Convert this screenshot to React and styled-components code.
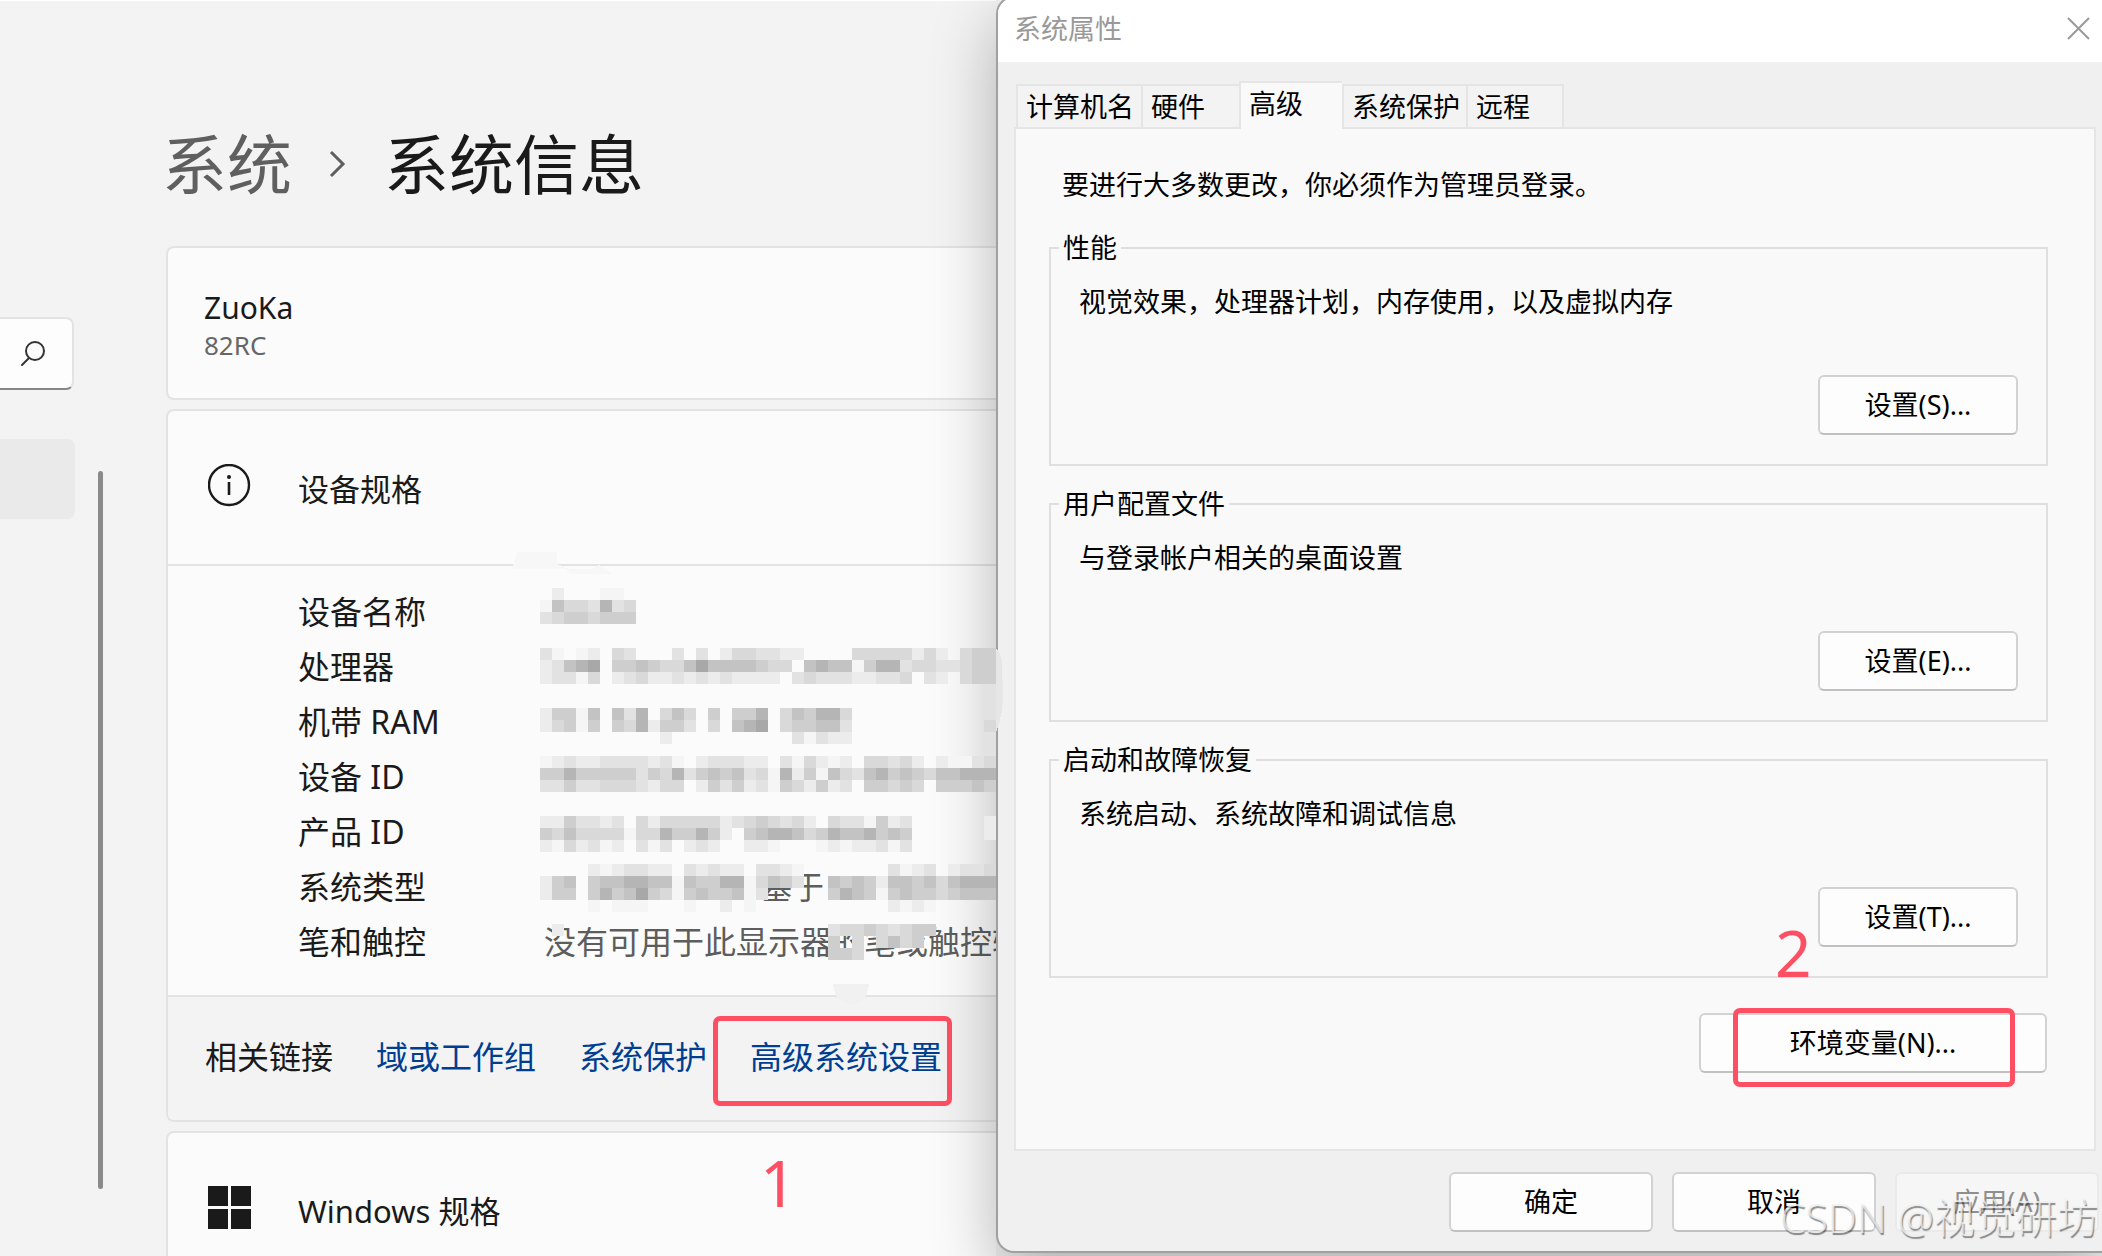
import { useState } from 'react'
import styled, { createGlobalStyle, css } from 'styled-components'

const GlobalStyle = createGlobalStyle`
    * {
        box-sizing: border-box;
    }
    body {
        margin: 0;
        background: #f3f3f3;
        color: #1a1a1a;
        font-family: "Noto Sans", "Noto Sans CJK SC", sans-serif;
    }
    button, input {
        font-family: inherit;
    }
`

const Desktop = styled.div`
    display: grid;
    grid-template-columns: minmax(0, 1fr) 1106px;
    grid-template-rows: minmax(0, 1fr);
    height: 100vh;
    overflow: hidden;
`

/* Settings window, the dialog covers whatever runs out of it */

const Settings = styled.div`
    display: flex;
    min-width: 0;
    border-top: 1px solid #fff;
`

const Sidebar = styled.aside`
    display: flex;
    flex: 0 0 166px;
    gap: 23px;
`

const SideNav = styled.nav`
    width: 75px;
    padding-top: 316px;
`

const SearchBox = styled.form`
    display: flex;
    align-items: center;
    justify-content: flex-end;
    height: 73px;
    margin-right: 1px;
    padding-right: 26px;
    background: #fdfdfd;
    border: 2px solid #e3e3e3;
    border-left: 0;
    border-bottom-color: #868686;
    border-radius: 0 8px 8px 0;
`

const SearchInput = styled.input`
    flex: 1;
    min-width: 0;
    width: 0;
    padding: 0;
    border: 0;
    background: transparent;
    font-size: 26px;
    outline: none;
`

const IconButton = styled.button`
    display: flex;
    padding: 0;
    border: 0;
    background: transparent;
    cursor: pointer;
`

const NavItem = styled.a`
    display: block;
    height: 80px;
    margin-top: 49px;
    background: #eaeaea;
    border-radius: 0 8px 8px 0;
`

const ScrollThumb = styled.div`
    width: 5px;
    height: 718px;
    margin-top: 470px;
    background: #8a8a8a;
    border-radius: 3px;
`

const Content = styled.main`
    display: flex;
    flex: 1;
    flex-direction: column;
    gap: 9px;
    min-width: 0;
`

const Breadcrumb = styled.header`
    display: flex;
    align-items: center;
    gap: 37px;
    margin-left: -4px;
    padding: 123px 0 33px;
    font-size: 65px;
    line-height: 80px;
    white-space: nowrap;
`

const CrumbLink = styled.a`
    color: #5f5f5f;
    text-decoration: none;
`

const PageTitle = styled.h1`
    margin: 0;
    font-size: inherit;
    font-weight: 400;
`

const Card = styled.section`
    flex-shrink: 0;
    background: #fbfbfb;
    border: 2px solid #e3e3e3;
    border-right: 0;
    border-radius: 8px 0 0 8px;
    white-space: nowrap;
`

const DeviceCard = styled(Card)`
    padding: 41px 36px 35px;
`

const DeviceName = styled.div`
    font-size: 30px;
    line-height: 38px;
`

const DeviceModel = styled.div`
    color: #666;
    font-size: 26px;
    line-height: 36px;
`

const CardHeader = styled.div`
    display: flex;
    align-items: center;
    gap: 47px;
    height: 155px;
    padding: 0 40px;
    border-bottom: 2px solid #e3e3e3;

    svg {
        margin-bottom: 4px;
    }
`

const CardTitle = styled.h2`
    margin: 0;
    padding-top: 2px;
    font-size: 31px;
    font-weight: 400;
    line-height: 40px;
`

const SpecBody = styled.div`
    position: relative;
    padding: 18px 0 26px 130px;
`

const SpecList = styled.dl`
    display: grid;
    grid-template-columns: 244px minmax(0, 1fr);
    grid-auto-rows: 55px;
    align-items: center;
    margin: 0;
    font-size: 32px;
    line-height: 40px;
`

const SpecName = styled.dt`
    color: #1a1a1a;
`

const SpecValue = styled.dd`
    margin: 0;
    padding-left: ${({ $indent }) => $indent || 2}px;
    color: #5d5d5d;
`

// lies over the values and runs a little past the edge of the dialog
const MosaicLayer = styled.svg`
    position: absolute;
    top: 22px;
    left: 372px;
    z-index: 3;
    overflow: visible;
    pointer-events: none;
`

const RelatedLinks = styled.div`
    display: flex;
    align-items: center;
    gap: 43px;
    height: 125px;
    padding: 0 0 3px 37px;
    background: #f3f3f3;
    border-top: 2px solid #e3e3e3;
    border-radius: 0 0 0 8px;
    font-size: 32px;
    line-height: 40px;
`

const RelatedLink = styled.a`
    position: relative;
    color: #003e92;
    text-decoration: none;
`

/* Red marks of the tutorial */

const markBox = css`
    position: absolute;
    border: 5px solid #ff4f62;
    border-radius: 7px;
    pointer-events: none;
`

const LinkMark = styled.span`
    ${markBox}
    inset: -21px -10px -29px -37px;
`

const ButtonMark = styled.span`
    ${markBox}
    inset: -5px 32px -14px 34px;
`

const StepNumber = styled.span`
    position: absolute;
    top: ${({ $top }) => $top}px;
    left: ${({ $left }) => $left}px;
    z-index: 4;
    color: #ff4f62;
    font-size: 64px;
    line-height: 64px;
    pointer-events: none;
`

/* System properties dialog */

const Dialog = styled.div`
    position: relative;
    z-index: 2;
    display: flex;
    flex-direction: column;
    margin: -4px 0 3px;
    background: #f0f0f0;
    border: 2px solid #a0a0a0;
    border-right: 0;
    border-radius: 18px 0 0 18px;
    box-shadow: 0 24px 64px rgba(0, 0, 0, 0.28);
    color: #000;
    font-size: 27px;
    line-height: 36px;
    white-space: nowrap;
`

const TitleBar = styled.div`
    display: flex;
    align-items: center;
    justify-content: space-between;
    height: 64px;
    padding: 0 12px 3px 16px;
    background: #fff;
    border-radius: 16px 0 0 0;
    color: #999;
`

const TabList = styled.div`
    display: flex;
    align-items: flex-end;
    height: 65px;
    padding-left: 18px;
`

const Tab = styled.button`
    width: ${({ $width }) => $width}px;
    height: ${({ $active }) => ($active ? 48 : 43)}px;
    margin-bottom: ${({ $active }) => ($active ? -2 : 0)}px;
    padding: 0 0 ${({ $active }) => ($active ? 4 : 0)}px 8px;
    background: ${({ $active }) => ($active ? '#f9f9f9' : '#f3f3f3')};
    border: 2px solid #e5e5e5;
    border-bottom: 0;
    border-right-width: ${({ $last }) => ($last ? 2 : 0)}px;
    color: #000;
    font-size: 27px;
    line-height: 36px;
    text-align: left;
    z-index: ${({ $active }) => ($active ? 1 : 0)};
`

const TabPanel = styled.div`
    flex: 1;
    margin: 0 6px 0 16px;
    padding: 38px 46px 0 33px;
    background: #f9f9f9;
    border: 2px solid #e5e5e5;
`

const Intro = styled.p`
    margin: 0 0 27px;
    padding-left: 13px;
`

const Group = styled.fieldset`
    display: block;
    min-width: 0;
    margin: 0 0 20px;
    padding: 18px 28px 29px;
    border: 2px solid #dfdfdf;
`

const Legend = styled.legend`
    margin-left: -20px;
    padding: 0 4px;
`

const GroupText = styled.p`
    margin: 0 0 55px;
`

const ButtonRow = styled.div`
    display: flex;
    justify-content: flex-end;
`

const PushButton = styled.button`
    width: ${({ $width }) => $width || 200}px;
    height: 60px;
    padding: 0;
    background: #fdfdfd;
    border: 2px solid #d2d2d2;
    border-bottom-color: #c0c0c0;
    border-radius: 6px;
    color: #000;
    font-size: 27px;
    line-height: 36px;

    &:disabled {
        background: #f6f6f6;
        border-color: #eaeaea;
        color: #8f8f8f;
    }
`

const EnvRow = styled(ButtonRow)`
    padding: 15px 1px 0 0;
`

const Marked = styled.div`
    position: relative;
    display: flex;
`

const DialogFooter = styled(ButtonRow)`
    gap: 19px;
    padding: 21px 3px 19px;
`

const Watermark = styled.div`
    position: absolute;
    right: 4px;
    bottom: 6px;
    color: rgba(240, 240, 240, 0.8);
    font-size: 41px;
    font-weight: 300;
    line-height: 56px;
    text-shadow: 1px 2px 1px rgba(0, 0, 0, 0.45);
    pointer-events: none;
`

const specs = [
    { name: '设备名称' },
    { name: '处理器' },
    { name: '机带 RAM' },
    { name: '设备 ID' },
    { name: '产品 ID' },
    { name: '系统类型', value: '基于', indent: 218 },
    { name: '笔和触控', value: '没有可用于此显示器的笔或触控输入' },
]

const tabs = [
    { name: '计算机名', width: 125 },
    { name: '硬件', width: 98 },
    { name: '高级', width: 103 },
    { name: '系统保护', width: 124 },
    { name: '远程', width: 98 },
]

const groups = [
    { title: '性能', text: '视觉效果，处理器计划，内存使用，以及虚拟内存', button: '设置(S)...' },
    { title: '用户配置文件', text: '与登录帐户相关的桌面设置', button: '设置(E)...' },
    { title: '启动和故障恢复', text: '系统启动、系统故障和调试信息', button: '设置(T)...' },
]

// one character per 12px block, a higher digit is a darker grey
const mosaic = [
    '.2...11.',
    '16443734',
    '34554555',
    '',
    '',
    '31.12.43...3.3.2443322....44444242.455',
    '23678.556544686666544.6766157734433455',
    '23314.23422323232222.3433322334.32.455',
    '.....................................3',
    '.....................................3',
    '25516.637.464.5.557.465774...........3',
    '24515.5472553.4.678.455663...........4',
    '..........2..........31322...........3',
    '.....................................3',
    '123223333231.233322.314212.44342.21134',
    '55755555354735656341725164367565466777',
    '335334443244.2535231542523.55454.55565',
    '',
    '',
    '2253323.424444423454342.4331523......2',
    '5464444144755752.56776457667565......2',
    '2142312.313.232..221...12122313.......',
    '',
    '....2123322.32322.3321.......3123.2334',
    '256.566776616557714653..65652665646777',
    '255.575685415655613.....57651565545666',
    '....1.111...1..2.1...........2121.....',
    '',
    '.2......................344543455.....',
    '........................5.4.4645......',
    '........................554...........',
]

const greys = ['', '#f5f5f5', '#ececec', '#e2e2e2', '#d9d9d9', '#cecece', '#c3c3c3', '#b5b5b5', '#a8a8a8']

const Mosaic = () => (
    <MosaicLayer width='456' height='372' viewBox='0 0 456 372' shapeRendering='crispEdges' aria-hidden='true'>
        <path d='M-23 -36h40v12l12 5h22l8 -4l13 9h-42l-5 -5h-53z' fill='#f7f7f7' />
        <path d='M293 396h36q-2 20 -18 20t-18 -20z' fill='#f1f1f1' />
        <path d='M456 60q8 8 6 26q4 34 -6 58z' fill='#e6e6e6' />
        {mosaic.map((row, y) =>
            [...row].map((level, x) =>
                level === '.' ? null : (
                    <rect key={`${x}-${y}`} x={x * 12} y={y * 12} width='12' height='12' fill={greys[level]} />
                )
            )
        )}
    </MosaicLayer>
)

const SearchIcon = () => (
    <svg width='26' height='26' viewBox='0 0 26 26' fill='none' stroke='#333' strokeWidth='2' strokeLinecap='round'>
        <circle cx='15' cy='10' r='9' />
        <path d='M9 17l-7 7' />
    </svg>
)

const ChevronIcon = () => (
    <svg width='18' height='28' viewBox='0 0 18 28' fill='none' stroke='#5f5f5f' strokeWidth='3'>
        <path d='M2 2l12 12L2 26' />
    </svg>
)

const InfoIcon = () => (
    <svg width='43' height='43' viewBox='0 0 43 43' fill='none' stroke='#1a1a1a'>
        <circle cx='21' cy='21' r='20' strokeWidth='2.4' />
        <path d='M21 18v13' strokeWidth='2.6' />
        <circle cx='21' cy='13' r='2' fill='#1a1a1a' stroke='none' />
    </svg>
)

const WindowsIcon = () => (
    <svg width='43' height='43' viewBox='0 0 43 43' fill='#1a1a1a'>
        <path d='M0 0h20v20H0zM23 0h20v20H23zM0 23h20v20H0zM23 23h20v20H23z' />
    </svg>
)

const CloseIcon = () => (
    <svg width='23' height='23' viewBox='0 0 23 23' stroke='#999' strokeWidth='2'>
        <path d='M1 1l21 21M22 1L1 22' />
    </svg>
)

const SettingsWindow = () => (
    <Settings>
        <Sidebar>
            <SideNav>
                <SearchBox onSubmit={(e) => e.preventDefault()}>
                    <SearchInput type='text' name='query' aria-label='搜索' autoComplete='off' />
                    <IconButton type='submit' aria-label='搜索'><SearchIcon /></IconButton>
                </SearchBox>
                <NavItem href='#system' aria-label='系统' />
            </SideNav>
            <ScrollThumb />
        </Sidebar>
        <Content>
            <Breadcrumb>
                <CrumbLink href='#system'>系统</CrumbLink>
                <ChevronIcon />
                <PageTitle>系统信息</PageTitle>
            </Breadcrumb>
            <DeviceCard>
                <DeviceName>ZuoKa</DeviceName>
                <DeviceModel>82RC</DeviceModel>
            </DeviceCard>
            <Card>
                <CardHeader>
                    <InfoIcon />
                    <CardTitle>设备规格</CardTitle>
                </CardHeader>
                <SpecBody>
                    <SpecList>
                        {specs.map(({ name, value, indent }) => [
                            <SpecName key={name}>{name}</SpecName>,
                            <SpecValue key={`${name}-value`} $indent={indent}>{value}</SpecValue>,
                        ])}
                    </SpecList>
                    <Mosaic />
                </SpecBody>
                <RelatedLinks>
                    <span>相关链接</span>
                    <RelatedLink href='#domain'>域或工作组</RelatedLink>
                    <RelatedLink href='#protection'>系统保护</RelatedLink>
                    <RelatedLink href='#advanced'>
                        高级系统设置
                        <LinkMark />
                        <StepNumber $top={114} $left={10}>1</StepNumber>
                    </RelatedLink>
                </RelatedLinks>
            </Card>
            <Card>
                <CardHeader>
                    <WindowsIcon />
                    <CardTitle>Windows 规格</CardTitle>
                </CardHeader>
            </Card>
        </Content>
    </Settings>
)

const PropertiesDialog = () => {
    const [active, setActive] = useState('高级')

    return (
        <Dialog role='dialog' aria-label='系统属性'>
            <TitleBar>
                <span>系统属性</span>
                <IconButton type='button' aria-label='关闭'><CloseIcon /></IconButton>
            </TitleBar>
            <TabList role='tablist'>
                {tabs.map(({ name, width }, i) => (
                    <Tab
                        key={name}
                        type='button'
                        role='tab'
                        aria-selected={active === name}
                        $active={active === name}
                        $last={i === tabs.length - 1}
                        $width={width}
                        onClick={() => setActive(name)}
                    >
                        {name}
                    </Tab>
                ))}
            </TabList>
            <TabPanel role='tabpanel'>
                <Intro>要进行大多数更改，你必须作为管理员登录。</Intro>
                {groups.map(({ title, text, button }) => (
                    <Group key={title}>
                        <Legend>{title}</Legend>
                        <GroupText>{text}</GroupText>
                        <ButtonRow>
                            <PushButton type='button'>{button}</PushButton>
                        </ButtonRow>
                    </Group>
                ))}
                <EnvRow>
                    <Marked>
                        <PushButton type='button' $width={348}>环境变量(N)...</PushButton>
                        <ButtonMark />
                        <StepNumber $top={-92} $left={76}>2</StepNumber>
                    </Marked>
                </EnvRow>
            </TabPanel>
            <DialogFooter>
                <PushButton type='button' $width={204}>确定</PushButton>
                <PushButton type='button' $width={204}>取消</PushButton>
                <PushButton type='button' $width={204} disabled>应用(A)</PushButton>
            </DialogFooter>
            <Watermark>CSDN @视觉研坊</Watermark>
        </Dialog>
    )
}

const App = () => (
    <>
        <GlobalStyle />
        <Desktop>
            <SettingsWindow />
            <PropertiesDialog />
        </Desktop>
    </>
)

export default App
